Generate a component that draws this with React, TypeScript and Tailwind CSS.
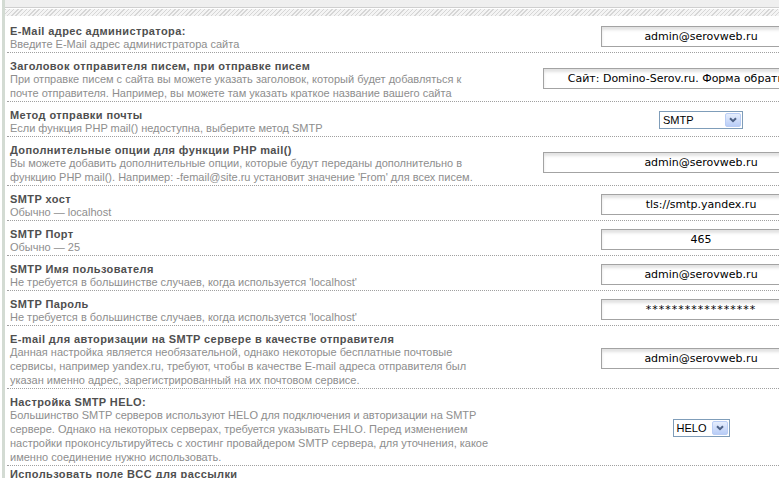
import React from "react";

type Control =
  | { kind: "input"; value: string; wide?: boolean; spaced?: boolean }
  | { kind: "select"; value: string; width: string };

interface Setting {
  title: string;
  desc: string[];
  control?: Control;
  tight?: boolean;
}

const settings: Setting[] = [
  {
    title: "E-Mail адрес администратора:",
    desc: ["Введите E-Mail адрес администратора сайта"],
    control: { kind: "input", value: "admin@serovweb.ru" },
  },
  {
    title: "Заголовок отправителя писем, при отправке писем",
    desc: [
      "При отправке писем с сайта вы можете указать заголовок, который будет добавляться к",
      "почте отправителя. Например, вы можете там указать краткое название вашего сайта",
    ],
    control: { kind: "input", value: "Сайт: Domino-Serov.ru. Форма обратной связи", wide: true },
  },
  {
    title: "Метод отправки почты",
    desc: ["Если функция PHP mail() недоступна, выберите метод SMTP"],
    control: { kind: "select", value: "SMTP", width: "w-[84px]" },
  },
  {
    title: "Дополнительные опции для функции PHP mail()",
    desc: [
      "Вы можете добавить дополнительные опции, которые будут переданы дополнительно в",
      "функцию PHP mail(). Например: -femail@site.ru установит значение 'From' для всех писем.",
    ],
    control: { kind: "input", value: "admin@serovweb.ru", wide: true },
  },
  {
    title: "SMTP хост",
    desc: ["Обычно — localhost"],
    control: { kind: "input", value: "tls://smtp.yandex.ru" },
  },
  {
    title: "SMTP Порт",
    desc: ["Обычно — 25"],
    control: { kind: "input", value: "465" },
  },
  {
    title: "SMTP Имя пользователя",
    desc: ["Не требуется в большинстве случаев, когда используется 'localhost'"],
    control: { kind: "input", value: "admin@serovweb.ru" },
  },
  {
    title: "SMTP Пароль",
    desc: ["Не требуется в большинстве случаев, когда используется 'localhost'"],
    control: { kind: "input", value: "*****************", spaced: true },
  },
  {
    title: "E-mail для авторизации на SMTP сервере в качестве отправителя",
    desc: [
      "Данная настройка является необязательной, однако некоторые бесплатные почтовые",
      "сервисы, например yandex.ru, требуют, чтобы в качестве E-mail адреса отправителя был",
      "указан именно адрес, зарегистрированный на их почтовом сервисе.",
    ],
    control: { kind: "input", value: "admin@serovweb.ru" },
  },
  {
    title: "Настройка SMTP HELO:",
    desc: [
      "Большинство SMTP серверов используют HELO для подключения и авторизации на SMTP",
      "сервере. Однако на некоторых серверах, требуется указывать EHLO. Перед изменением",
      "настройки проконсультируйтесь с хостинг провайдером SMTP сервера, для уточнения, какое",
      "именно соединение нужно использовать.",
    ],
    control: { kind: "select", value: "HELO", width: "w-[57px]" },
  },
  {
    title: "Использовать поле BCC для рассылки",
    desc: [],
    tight: true,
  },
];

function XpSelect({ value, width }: { value: string; width: string }) {
  return (
    <div className={`${width} flex h-[18px] items-center border border-[#7f9db9] bg-white`}>
      <span className="flex-1 pl-[3px] font-['Liberation_Sans',sans-serif] text-[11px] leading-none text-black">
        {value}
      </span>
      <span className="mr-px flex h-[14px] w-[16px] items-center justify-center rounded-[2px] border border-[#b9cdf5] bg-gradient-to-b from-[#e6eefd] to-[#b9cdf7]">
        <svg width="8" height="6" viewBox="0 0 8 6">
          <path d="M1 1.2 L4 4.2 L7 1.2" fill="none" stroke="#4d6185" strokeWidth="2" />
        </svg>
      </span>
    </div>
  );
}

function TextField({ value, wide, spaced }: { value: string; wide?: boolean; spaced?: boolean }) {
  return (
    <input
      readOnly
      value={value}
      className={`${wide ? "w-[316px]" : "w-[200px]"} ${spaced ? "tracking-[1px]" : ""} h-[21px] shrink-0 border border-[#a3a3a3] bg-white text-center font-['DejaVu_Sans',sans-serif] text-[11px] text-black shadow-[inset_0_3px_3px_#e2e2e2] outline-none`}
    />
  );
}

function SettingRow({ item }: { item: Setting }) {
  return (
    <div className="flex items-center border-b border-dotted border-[#a0a0a0] pl-[3px]">
      <div
        className={`${item.tight ? "pt-[2px]" : "pt-[7px]"} w-[480px] shrink-0 pb-px font-['Liberation_Sans',sans-serif] text-[11px]`}
      >
        <div className="whitespace-nowrap font-bold leading-[12px] tracking-[0.4px] text-[#4f4f4f]">{item.title}</div>
        {item.desc.map((line) => (
          <div key={line} className="whitespace-nowrap leading-[14px] text-[#8e8e8e]">
            {line}
          </div>
        ))}
      </div>
      <div className="mt-[2px] flex w-[422px] shrink-0 justify-center">
        {item.control?.kind === "input" && (
          <TextField value={item.control.value} wide={item.control.wide} spaced={item.control.spaced} />
        )}
        {item.control?.kind === "select" && <XpSelect value={item.control.value} width={item.control.width} />}
      </div>
    </div>
  );
}

export default function App() {
  return (
    <div className="h-[478px] w-[779px] overflow-hidden bg-white">
      <div className="ml-[2px] h-full border-l-[3px] border-[#d3dbd3]">
        <div className="h-[8px] border-b border-[#cfcfcf] bg-[#efefef]" />
        <div className="mt-px h-[7px] bg-[repeating-linear-gradient(135deg,#d6d6d6_0px,#d6d6d6_1px,#f4f4f4_1px,#f4f4f4_3px)]" />
        <div className="pl-[2px] pt-[2px]">
          {settings.map((s) => (
            <SettingRow key={s.title} item={s} />
          ))}
        </div>
      </div>
    </div>
  );
}
